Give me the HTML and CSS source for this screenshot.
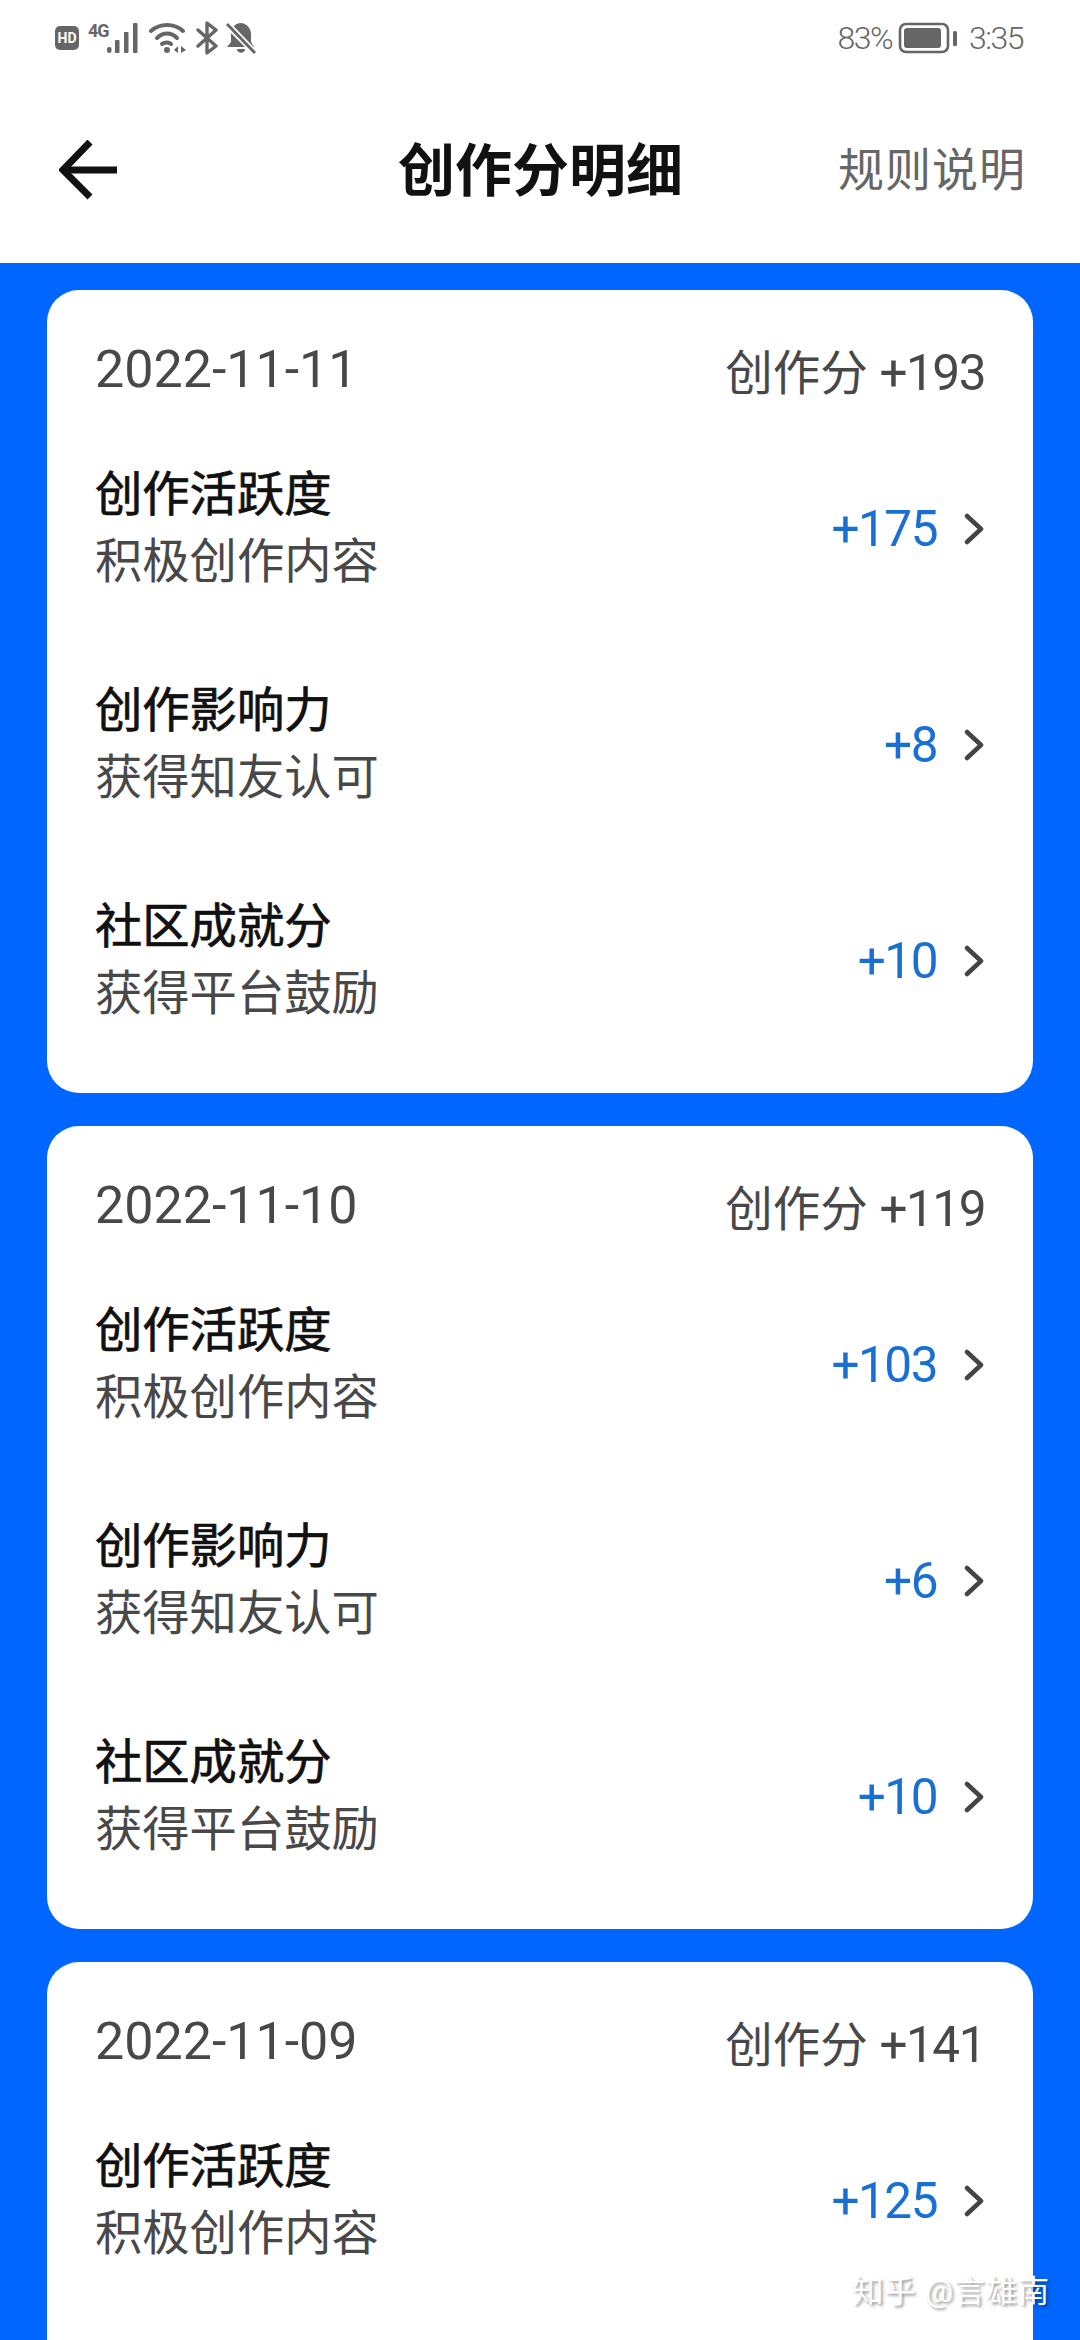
FILE: index.html
```html
<!DOCTYPE html>
<html lang="zh-CN">
<head>
    <meta charset="UTF-8">
    <meta name="viewport" content="width=device-width, initial-scale=1.0">
    <title>创作分明细</title>
    <link rel="stylesheet" href="styles.css">
</head>
<body>
    <div class="top">
        <div class="status">
            <div class="status-left">
                <span class="hd">HD</span>
                <span class="net">4G</span>
                <svg class="signal" width="32" height="32" viewBox="0 0 32 32" fill="#666">
                    <rect x="0" y="25" width="4.5" height="6" rx="2"/>
                    <rect x="8" y="18" width="4.5" height="13" rx="1"/>
                    <rect x="17" y="10" width="4.5" height="21" rx="1"/>
                    <rect x="26" y="1" width="4.5" height="30" rx="1"/>
                </svg>
                <svg class="wifi" width="38" height="32" viewBox="0 0 38 32" fill="none" stroke="#666" stroke-width="4" stroke-linecap="round">
                    <path d="M2 9C11 1 25 1 34 9"/>
                    <path d="M8 16C14 10 22 10 28 16"/>
                    <path d="M13 22C16 20 20 20 22 22"/>
                    <circle cx="18" cy="28" r="3" fill="#666" stroke="none"/>
                    <path d="M29 24L25 28L29 31Z" fill="#666" stroke="none"/>
                    <path d="M32 24L37 28L32 31Z" fill="#666" stroke="none"/>
                </svg>
                <svg class="bt" width="22" height="34" viewBox="0 0 22 34" fill="none" stroke="#666" stroke-width="3.4" stroke-linejoin="round" stroke-linecap="round">
                    <path d="M2 9L20 25L11 32V2L20 9L2 25"/>
                </svg>
                <svg class="bell" width="30" height="32" viewBox="0 0 30 32" fill="#666">
                    <path d="M15 1C9 1 7 5 6 8L22 25H28L25 20V12C25 6 20 1 15 1Z"/>
                    <path d="M5 11L19 25H1L5 20Z"/>
                    <path d="M11 27H19C19 32 11 32 11 27Z"/>
                    <path d="M2 2L29 30" stroke="#fff" stroke-width="5"/>
                    <path d="M1 2L29 31" stroke="#666" stroke-width="3"/>
                </svg>
            </div>
            <div class="status-right">
                <span>83%</span>
                <svg class="battery" width="59" height="32" viewBox="0 0 59 32">
                    <rect x="2" y="2" width="48" height="28" rx="6" fill="none" stroke="#666" stroke-width="2.6"/>
                    <rect x="6" y="6" width="37" height="20" rx="3" fill="#666"/>
                    <rect x="55" y="9" width="4" height="15" rx="1.5" fill="#666"/>
                </svg>
                <span>3:35</span>
            </div>
        </div>
        <div class="nav">
            <svg class="back" width="60" height="60" viewBox="0 0 60 60" fill="none" stroke="#111" stroke-width="7">
                <path d="M58 30H4"/>
                <path d="M31 2L4 30L31 57"/>
            </svg>
            <h1 class="nav-title">创作分明细</h1>
            <a class="nav-link">规则说明</a>
        </div>
    </div>

    <div class="list">
        <div class="card">
            <div class="card-head"><span class="date">2022-11-11</span><span>创作分 <span class="num">+193</span></span></div>
            <div class="row">
                <div><div class="row-title">创作活跃度</div><div class="row-sub">积极创作内容</div></div>
                <div class="row-val"><span class="num">+175</span><svg class="chev" width="20" height="32" viewBox="0 0 20 32"><path d="M3 3L17 16L3 29"/></svg></div>
            </div>
            <div class="row">
                <div><div class="row-title">创作影响力</div><div class="row-sub">获得知友认可</div></div>
                <div class="row-val"><span class="num">+8</span><svg class="chev" width="20" height="32" viewBox="0 0 20 32"><path d="M3 3L17 16L3 29"/></svg></div>
            </div>
            <div class="row">
                <div><div class="row-title">社区成就分</div><div class="row-sub">获得平台鼓励</div></div>
                <div class="row-val"><span class="num">+10</span><svg class="chev" width="20" height="32" viewBox="0 0 20 32"><path d="M3 3L17 16L3 29"/></svg></div>
            </div>
        </div>

        <div class="card">
            <div class="card-head"><span class="date">2022-11-10</span><span>创作分 <span class="num">+119</span></span></div>
            <div class="row">
                <div><div class="row-title">创作活跃度</div><div class="row-sub">积极创作内容</div></div>
                <div class="row-val"><span class="num">+103</span><svg class="chev" width="20" height="32" viewBox="0 0 20 32"><path d="M3 3L17 16L3 29"/></svg></div>
            </div>
            <div class="row">
                <div><div class="row-title">创作影响力</div><div class="row-sub">获得知友认可</div></div>
                <div class="row-val"><span class="num">+6</span><svg class="chev" width="20" height="32" viewBox="0 0 20 32"><path d="M3 3L17 16L3 29"/></svg></div>
            </div>
            <div class="row">
                <div><div class="row-title">社区成就分</div><div class="row-sub">获得平台鼓励</div></div>
                <div class="row-val"><span class="num">+10</span><svg class="chev" width="20" height="32" viewBox="0 0 20 32"><path d="M3 3L17 16L3 29"/></svg></div>
            </div>
        </div>

        <div class="card">
            <div class="card-head"><span class="date">2022-11-09</span><span>创作分 <span class="num">+141</span></span></div>
            <div class="row">
                <div><div class="row-title">创作活跃度</div><div class="row-sub">积极创作内容</div></div>
                <div class="row-val"><span class="num">+125</span><svg class="chev" width="20" height="32" viewBox="0 0 20 32"><path d="M3 3L17 16L3 29"/></svg></div>
            </div>
        </div>
    </div>

    <div class="watermark">知乎 @言雄南</div>
</body>
</html>
```

FILE: styles.css
```css
html, body {
    margin: 0;
    padding: 0;
    height: 2340px;
    overflow: hidden;
}

body {
    position: relative;
    width: 1080px;
    background-color: #0066ff;
    font-family: 'Roboto', 'Noto Sans CJK SC', sans-serif;
}

.top {
    height: 263px;
    background-color: #fff;
}

.status {
    height: 76px;
    padding: 0 57px 0 55px;
    display: flex;
    justify-content: space-between;
    align-items: center;
}

.status-left {
    display: flex;
    align-items: center;
}

.hd {
    width: 24px;
    height: 24px;
    border-radius: 5px;
    background-color: #666;
    color: #fff;
    font-size: 14px;
    font-weight: 700;
    line-height: 24px;
    text-align: center;
}

.net {
    margin: -16px 0 0 9px;
    width: 20px;
    color: #666;
    font-size: 18px;
    font-weight: 700;
    letter-spacing: -1px;
}

.signal {
    margin-left: -1px;
}

.wifi {
    margin-left: 10px;
}

.bt {
    margin-left: 9px;
}

.bell {
    margin-left: 8px;
}

.status-right {
    display: flex;
    align-items: center;
    color: #666;
    font-size: 32px;
    font-weight: 300;
    letter-spacing: -1.5px;
}

.battery {
    margin: 0 12px 0 6px;
}

.nav {
    height: 187px;
    padding: 0 54px 0 59px;
    display: grid;
    grid-template-columns: 1fr auto 1fr;
    align-items: center;
    box-sizing: border-box;
}

.nav-title {
    margin: 0 4px 8px 0;
    color: #111;
    font-size: 57px;
    font-weight: 700;
}

.nav-link {
    justify-self: end;
    margin-bottom: 8px;
    color: #666;
    font-size: 46px;
    letter-spacing: 1px;
    font-weight: 400;
}

.list {
    height: 2077px;
    box-sizing: border-box;
    overflow: hidden;
    padding: 27px 47px 0;
    display: flex;
    flex-direction: column;
    gap: 33px;
}

.card {
    flex: none;
    height: 803px;
    box-sizing: border-box;
    padding: 0 48px 0 48px;
    background-color: #fff;
    border-radius: 32px;
}

.card-head {
    height: 160px;
    display: flex;
    justify-content: space-between;
    align-items: center;
    color: #484848;
    font-size: 47.5px;
    font-weight: 400;
    padding-bottom: 2px;
    box-sizing: border-box;
}

.date {
    font-size: 52px;
}

.num {
    font-size: 49.5px;
    letter-spacing: -1.5px;
}

.row {
    height: 216px;
    display: flex;
    justify-content: space-between;
    align-items: center;
    padding-bottom: 58px;
    box-sizing: border-box;
}

.row-title {
    color: #111;
    font-size: 47.3px;
    font-weight: 400;
    line-height: 67px;
    -webkit-text-stroke: 0.7px #111;
}

.row-sub {
    color: #484848;
    font-size: 47.3px;
    line-height: 67px;
    font-weight: 400;
}

.row-val {
    display: flex;
    align-items: center;
    color: #1a6fd4;
    font-size: 48px;
    font-weight: 400;
}

.chev {
    margin-left: 27px;
    margin-right: 1px;
    fill: none;
    stroke: #444;
    stroke-width: 4.5;
    stroke-linecap: round;
    stroke-linejoin: round;
}

.watermark {
    position: absolute;
    right: 30px;
    top: 2266px;
    color: #fff;
    font-size: 31px;
    letter-spacing: 1px;
    text-shadow: 2px 2px 3px rgba(0, 0, 0, 0.4);
}
```
